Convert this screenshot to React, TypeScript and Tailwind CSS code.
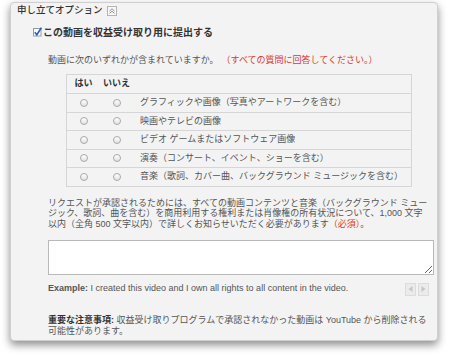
import React from 'react';

const rows = [
    'グラフィックや画像（写真やアートワークを含む）',
    '映画やテレビの画像',
    'ビデオ ゲームまたはソフトウェア画像',
    '演奏（コンサート、イベント、ショーを含む）',
    '音楽（歌詞、カバー曲、バックグラウンド ミュージックを含む）',
];

function Radio() {
    return (
        <span className="block w-[8px] h-[8px] rounded-full border border-[#a8a8a8] bg-gradient-to-b from-white to-[#e2e2e2]" />
    );
}

function CollapseIcon() {
    return (
        <svg width="10" height="10" viewBox="0 0 10 10" className="ml-[4px]">
            <rect x="0.5" y="0.5" width="9" height="9" fill="#f7f7f7" stroke="#b4b4b4" />
            <path d="M2.5 5 L5 2.8 L7.5 5 M2.5 7.4 L5 5.2 L7.5 7.4" fill="none" stroke="#888" strokeWidth="0.9" />
        </svg>
    );
}

function CheckIcon() {
    return (
        <svg width="9" height="10" viewBox="0 0 9 10" className="shrink-0">
            <rect x="0.5" y="1.5" width="7.5" height="7.5" fill="#fff" stroke="#8f9cb0" />
            <path d="M1.8 5.3 L3.8 7.8 L8.4 0.6" fill="none" stroke="#2f5fb5" strokeWidth="1.6" />
        </svg>
    );
}

function ArrowButton({ dir }: { dir: 'left' | 'right' }) {
    return (
        <span className="flex items-center justify-center w-[11px] h-[13px] bg-[#ebebeb] border border-[#dcdcdc]">
            <svg width="5" height="6" viewBox="0 0 5 6">
                {dir === 'left' ? (
                    <path d="M4.5 0 L0.5 3 L4.5 6 Z" fill="#c6c6c6" />
                ) : (
                    <path d="M0.5 0 L4.5 3 L0.5 6 Z" fill="#c6c6c6" />
                )}
            </svg>
        </span>
    );
}

export default function App() {
    return (
        <div className="w-[450px] h-[359px] bg-white overflow-hidden pt-[2px] pl-[10px] font-['Liberation_Sans','Noto_Sans_CJK_JP',sans-serif] text-[9px] text-[#555]">
            <div className="w-[428px] h-[339px] bg-[#f3f3f3] border border-[#cfcfcf] rounded-[4px] shadow-[0_4px_9px_rgba(0,0,0,0.45)]">
                {/* Header */}
                <div className="flex items-center h-[15px] pl-[6px] text-[9.5px] text-[#333] font-medium">
                    <span>申し立てオプション</span>
                    <CollapseIcon />
                </div>

                {/* Monetize checkbox */}
                <div className="flex items-center gap-[1px] h-[12px] mt-[8px] pl-[22px] text-[10px] font-bold text-[#333]">
                    <CheckIcon />
                    <span>この動画を収益受け取り用に提出する</span>
                </div>

                <div className="pl-[37px] pr-[3px]">
                    {/* Question */}
                    <div className="flex items-center h-[12px] mt-[17px]">
                        <span>動画に次のいずれかが含まれていますか。</span>
                        <span className="ml-[3px] text-[#dc3a2e]">（すべての質問に回答してください。）</span>
                    </div>

                    {/* Table */}
                    <div className="ml-[18px] mt-[7px] w-[346px] border border-[#d6d6d6]">
                        <div className="flex items-center h-[18px] font-bold text-[#333]">
                            <span className="w-[33px] text-center">はい</span>
                            <span className="w-[33px] text-center">いいえ</span>
                        </div>
                        {rows.map((label) => (
                            <div key={label} className="flex items-center h-[18.5px] border-t border-[#d6d6d6]">
                                <span className="w-[33px] flex justify-center">
                                    <Radio />
                                </span>
                                <span className="w-[33px] flex justify-center">
                                    <Radio />
                                </span>
                                <span className="pl-[7px]">{label}</span>
                            </div>
                        ))}
                    </div>

                    {/* Description */}
                    <p className="mt-[11px] leading-[10.5px] whitespace-nowrap">
                        リクエストが承認されるためには、すべての動画コンテンツと音楽（バックグラウンド ミュー
                        <br />
                        ジック、歌詞、曲を含む）を商用利用する権利または肖像権の所有状況について、1,000 文字
                        <br />
                        以内（全角 500 文字以内）で詳しくお知らせいただく必要があります
                        <span className="text-[#dc3a2e]">（必須）</span>。
                    </p>

                    <textarea className="block mt-[11px] w-[386px] h-[35px] bg-white border border-[#b9b9b9] outline-none" />

                    {/* Example + pager */}
                    <div className="flex items-center justify-between h-[14px] mt-[7px] pr-[5px]">
                        <span>
                            <span className="font-bold">Example:</span> I created this video and I own all rights to all content in the video.
                        </span>
                        <span className="flex gap-[2px]">
                            <ArrowButton dir="left" />
                            <ArrowButton dir="right" />
                        </span>
                    </div>

                    {/* Notice */}
                    <p className="mt-[19px] leading-[11px] whitespace-nowrap">
                        <span className="font-bold text-[#333]">重要な注意事項:</span> 収益受け取りプログラムで承認されなかった動画は YouTube から削除される
                        <br />
                        可能性があります。
                    </p>
                </div>
            </div>
        </div>
    );
}
